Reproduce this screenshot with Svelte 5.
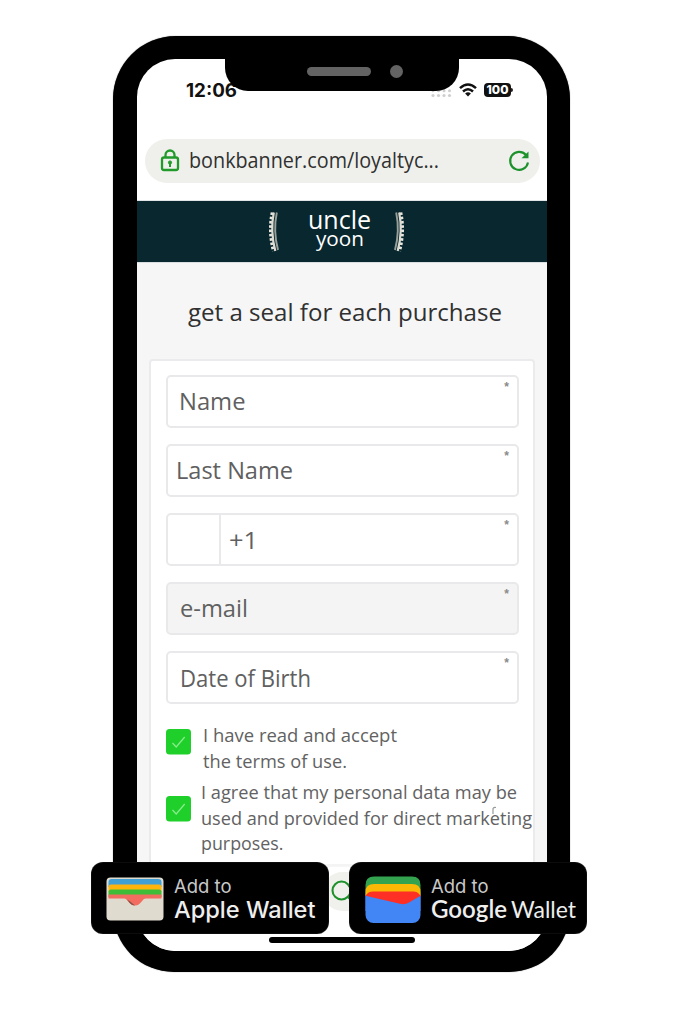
<script>
  const fields = [
    { text: 'Name', width: 66.5, kind: 'name' },
    { text: 'Last Name', width: 117, kind: 'last' },
    { text: '+1', width: 29, kind: 'phone-no' },
    { text: 'e-mail', width: 68, kind: 'email' },
    { text: 'Date of Birth', width: 131, kind: 'birth' }
  ];
</script>

{#snippet line(text, width, size)}
  <svg class="line" {width} height={Math.ceil(size * 1.2)}>
    <text x="0" y={size} font-size={size} textLength={width} lengthAdjust="spacingAndGlyphs">{text}</text>
  </svg>
{/snippet}

{#snippet seal()}
  <svg class="seal" width="12" height="41" viewBox="0 0 12 41" fill="none">
    <path d="M4.300 1.500Q.300 20 5.500 40" stroke="#e9e7df" stroke-width="3.200" stroke-dasharray="2.600 1.700" />
    <path d="M5.800 1.500Q2 20 7.300 40" stroke="#dddcd2" stroke-width="2.200" />
    <path d="M8.800 1.500Q5 20 10 39" stroke="#98a09a" stroke-width="1.900" />
  </svg>
{/snippet}

{#snippet check()}
  <svg class="check" width="25" height="26" viewBox="0 0 25 26">
    <rect width="25" height="25.500" rx="3.500" fill="#1fd02b" />
    <path d="M6.500 14l3.700 4 8.500-10" fill="none" stroke="#8aec8d" stroke-width="1.200" />
  </svg>
{/snippet}

<main>
  <div class="phone">
    <div class="screen">
      <div class="status">
        <div class="time">{@render line('12:06', 51, 18.5)}</div>
        <svg class="signal" width="21" height="9" viewBox="0 0 21 9" fill="#cfcfcf">
          {#each [2, 7.500, 13, 18.500] as x}
            <circle cx={x} cy="1.800" r="1.500" />
            <circle cx={x} cy="6.500" r="1.600" />
          {/each}
        </svg>
        <svg class="wifi" width="18" height="14" viewBox="0 0 18 14" fill="none" stroke="#111" stroke-width="2.500">
          <path d="M1 5.200Q9-2.200 17 5.200M4 8.500Q9 4 14 8.500" />
          <path d="M6.100 10.500Q9 8 11.900 10.500L9 13.400Z" fill="#111" stroke="none" />
        </svg>
        <div class="battery"><span>100</span></div>
      </div>

      <div class="address">
        <svg class="lock" width="20" height="24" viewBox="0 0 20 24" fill="none" stroke="#219a2b" stroke-width="2.300">
          <rect x="2" y="8.500" width="16" height="12.500" rx="2" />
          <path d="M5.500 8.500V6a4.500 4.500 0 0 1 9 0V8.500" />
          <path d="M10 13v5" stroke-width="2" />
          <circle cx="10" cy="13.500" r="1.600" fill="#219a2b" stroke-width="1" />
        </svg>
        <div class="url">{@render line('bonkbanner.com/loyaltyc...', 250, 21)}</div>
        <svg class="reload" width="22" height="22" viewBox="0 0 22 22" fill="none" stroke="#1d912b" stroke-width="2.100">
          <path d="M17.800 4.800A9 9 0 1 0 20 12.500" />
          <path d="M20.500 1.500V8.300H13.500Z" fill="#1d912b" stroke="none" />
        </svg>
      </div>

      <header>
        {@render seal()}
        <div class="brand">
          <div class="uncle">{@render line('uncle', 63, 25)}</div>
          <div class="yoon">{@render line('yoon', 48, 19.5)}</div>
        </div>
        <div class="flip">{@render seal()}</div>
      </header>

      <section class="body">
        <div class="title">{@render line('get a seal for each purchase', 314, 24.5)}</div>
        <div class="card">
          {#each fields as f}
            <div class="field {f.kind}">
              {@render line(f.text, f.width, 24)}
              <span class="star">*</span>
            </div>
          {/each}
          <div class="consent terms">
            {@render check()}
            <div class="copy">
              {@render line('I have read and accept', 194, 19)}
              {@render line('the terms of use.', 144, 19)}
            </div>
          </div>
          <div class="consent data">
            {@render check()}
            <div class="copy">
              {@render line('I agree that my personal data may be', 316, 19)}
              {@render line('used and provided for direct marketing', 331, 19)}
              {@render line('purposes.', 82.5, 19)}
              <svg class="tick" width="5" height="9"><path d="M1 8V2.500Q2 1 4 1.500" fill="none" stroke="#999" stroke-width="1.200" /></svg>
            </div>
          </div>
        </div>
      </section>

      <footer>
        <div class="search">
          <svg width="28" height="28" viewBox="0 0 28 28" fill="none" stroke="#1d912b" stroke-width="2.100">
            <circle cx="10.500" cy="10.500" r="9" /><path d="M16.500 16.500l8 8" />
          </svg>
        </div>
        <div class="home"></div>
      </footer>
    </div>
    <div class="notch"><i class="speaker"></i><i class="camera"></i></div>
  </div>

  <div class="wallets">
    <div class="wallet apple">
      <svg class="icon" width="58" height="44" viewBox="0 0 58 44">
        <rect x="0.500" y="0.500" width="57" height="43" rx="4" fill="#dfdbce" />
        <path d="M2.500 5Q2.500 2 5.500 2H52Q55.500 2 55.500 5V10H2.500Z" fill="#409fd5" />
        <path d="M2.500 10Q2.500 7.500 5 7.500H53Q55.500 7.500 55.500 10V15H2.500Z" fill="#ffb40b" />
        <path d="M2.500 15Q2.500 12.500 5 12.500H53Q55.500 12.500 55.500 15V20H2.500Z" fill="#40bd38" />
        <path d="M2.500 17.500H55.500V21.500H40C36 21.500 35 28.500 29 28.500S22 21.500 18 21.500H2.500Z" fill="#f26d5f" />
        <path d="M20 22C23 24 24 28.500 29 28.500C26 26 24 24 20 22Z" fill="#8c5147" />
      </svg>
      <div class="label">
        <div class="add">{@render line('Add to', 57.5, 18.5)}</div>
        <div class="apple-name">{@render line('Apple Wallet', 141.5, 23.5)}</div>
      </div>
    </div>
    <div class="wallet google">
      <svg class="icon" width="56" height="48" viewBox="0 0 56 48">
        <rect x="0.500" y="12" width="55" height="35" rx="8" fill="#4285f4" />
        <path d="M.500 19V9Q.500.500 9 .500H47Q55.500.500 55.500 9V19Z" fill="#34a350" />
        <path d="M.500 20V16Q.500 8 9 8H47Q55.500 8 55.500 16V20Z" fill="#fbb905" />
        <path d="M.500 19.500L35 27.500Q40 28.800 44 26L55.500 19.500V35H.500Z" fill="#4285f4" />
        <path d="M.500 19.800Q3 15.500 8 15.500H48Q53 15.500 55.500 19.800L44 26.500Q40 29 35 27.800Z" fill="#fe2f25" />
      </svg>
      <div class="label">
        <div class="add">{@render line('Add to', 57.5, 18.5)}</div>
        <div class="google-name">
          <b>{@render line('Google', 76, 24)}</b>
          {@render line('Wallet', 65, 24)}
        </div>
      </div>
    </div>
  </div>
</main>

<style>
  :global(body) { margin: 0; background: #fff; }
  main { position: relative; box-sizing: border-box; width: 673px; height: 1011px; padding: 36px 0 0 113px; overflow: hidden; font-family: "Open Sans", "Noto Sans", sans-serif; color: #606060; }
  svg { display: block; flex: none; }
  .line { overflow: visible; fill: currentColor; }
  .phone { position: relative; box-sizing: border-box; width: 457px; height: 936px; padding: 23px 23px 21px 24px; background: #000; border-radius: 63px 63px 61px 61px; box-shadow: 0 0 1px #555; }
  .screen { display: flex; flex-direction: column; width: 410px; height: 892px; overflow: hidden; background: #fff; border-radius: 38px; }
  .notch { position: absolute; left: 112px; top: 22px; width: 234px; height: 33px; background: #000; border-radius: 0 0 23px 23px; }
  .speaker { position: absolute; left: 82px; top: 9px; width: 64px; height: 9px; border-radius: 5px; background: #636363; }
  .camera { position: absolute; left: 165px; top: 7px; width: 13px; height: 13px; border-radius: 50%; background: #636363; }

  .status { display: flex; align-items: flex-start; height: 80px; box-sizing: border-box; padding: 19px 0 0 49px; color: #111; font-family: Inter, sans-serif; font-weight: 700; }
  .time { width: 245px; }
  .signal { margin-top: 11px; }
  .wifi { margin: 5px 0 0 7px; }
  .battery { position: relative; margin: 5px 0 0 7px; width: 27px; height: 14px; border-radius: 4px; background: #111; color: #fff; font: 800 12px/14px Inter, sans-serif; text-align: center; }
  .battery::after { content: ''; position: absolute; left: 27px; top: 5px; width: 2px; height: 4px; border-radius: 0 2px 2px 0; background: #222; }

  .address { box-sizing: border-box; display: flex; height: 44px; width: 395px; margin-left: 8px; padding-left: 15px; border-radius: 22px; background: #eff0eb; color: #303030; }
  .lock { margin-top: 10px; }
  .url { margin: 8px 0 0 8.5px; width: 318.5px; }
  .reload { margin-top: 11px; margin-left: 1px; }

  header { box-sizing: border-box; display: flex; align-items: flex-start; height: 61px; margin-top: 18px; padding: 10px 0 0 131px; background: #09272f; color: #fff; box-shadow: 0 0 1px #53676c; flex: none; position: relative; }
  .brand { margin: -7px 0 0 27.5px; width: 85.5px; }
  .yoon { margin: -8px 0 0 8.5px; }
  .flip { transform: scaleX(-1); }

  .body { height: 605px; flex: none; background: #f6f6f7; color: #606060; }
  .title { box-sizing: border-box; height: 97px; padding: 34px 0 0 51px; color: #303030; }
  .card { box-sizing: border-box; width: 386px; height: 507px; margin-left: 12px; padding: 14px 15px; background: #fff; border: 2px solid #ebebed; border-bottom-color: #f4f4f4; border-radius: 4px 4px 0 0; }
  .field { box-sizing: border-box; display: flex; justify-content: space-between; height: 53px; width: 353px; margin-bottom: 16px; padding: 9px 8px 0 11px; border: 2px solid #e9e9eb; border-radius: 5px; }
  .last { padding-left: 8px; }
  .phone-no { padding: 10px 8px 0 61px; background: linear-gradient(90deg, transparent 51px, #e9e9eb 51px, #e9e9eb 53px, transparent 53px); }
  .email { padding-left: 12px; background: #f4f4f4; }
  .birth { padding: 10px 8px 0 12px; margin-bottom: 19px; }
  .star { margin-top: -7px; color: #8b8b8b; font: 700 12px/16px "Liberation Sans", sans-serif; }
  .phone-no .star, .birth .star { margin-top: -8px; }
  .consent { display: flex; color: #626262; }
  .terms { height: 57px; }
  .terms .check { margin-top: 6px; }
  .terms .copy { display: grid; gap: 3px; margin-left: 12px; height: 49px; }
  .data .check { margin-top: 16px; }
  .data .copy { position: relative; display: grid; gap: 2.500px; margin-left: 9.5px; height: 74px; }
  .tick { position: absolute; left: 291px; top: 26px; }

  footer { position: relative; flex: 1; background: #fff; }
  .search { box-sizing: border-box; width: 100px; height: 39px; margin: 5px 0 0 186px; padding: 8px; border-radius: 20px; background: #f0f1ec; }
  .home { width: 146px; height: 6px; margin: 26px 0 0 132px; border-radius: 3px; background: #000; }

  .wallets { position: absolute; left: 91px; top: 862px; display: flex; gap: 20px; }
  .wallet { box-sizing: border-box; display: flex; width: 238px; height: 72px; padding: 15px 0 0 15px; border-radius: 12px; background: #000; box-shadow: inset 0 0 1px #777; color: #eee; font-family: Inter, sans-serif; }
  .label { margin: -3px 0 0 9.5px; }
  .add { color: #c8c8c8; height: 19px; font-family: Inter, sans-serif; }
  .apple-name { font-weight: 500; margin-top: 1px; }
  .google { padding: 14px 0 0 16px; }
  .google .label { margin: -2px 0 0 10px; }
  .google-name { display: flex; gap: 4px; margin-top: 1px; font-family: Lato, sans-serif; }
  .google-name b { font-weight: 600; }
</style>
